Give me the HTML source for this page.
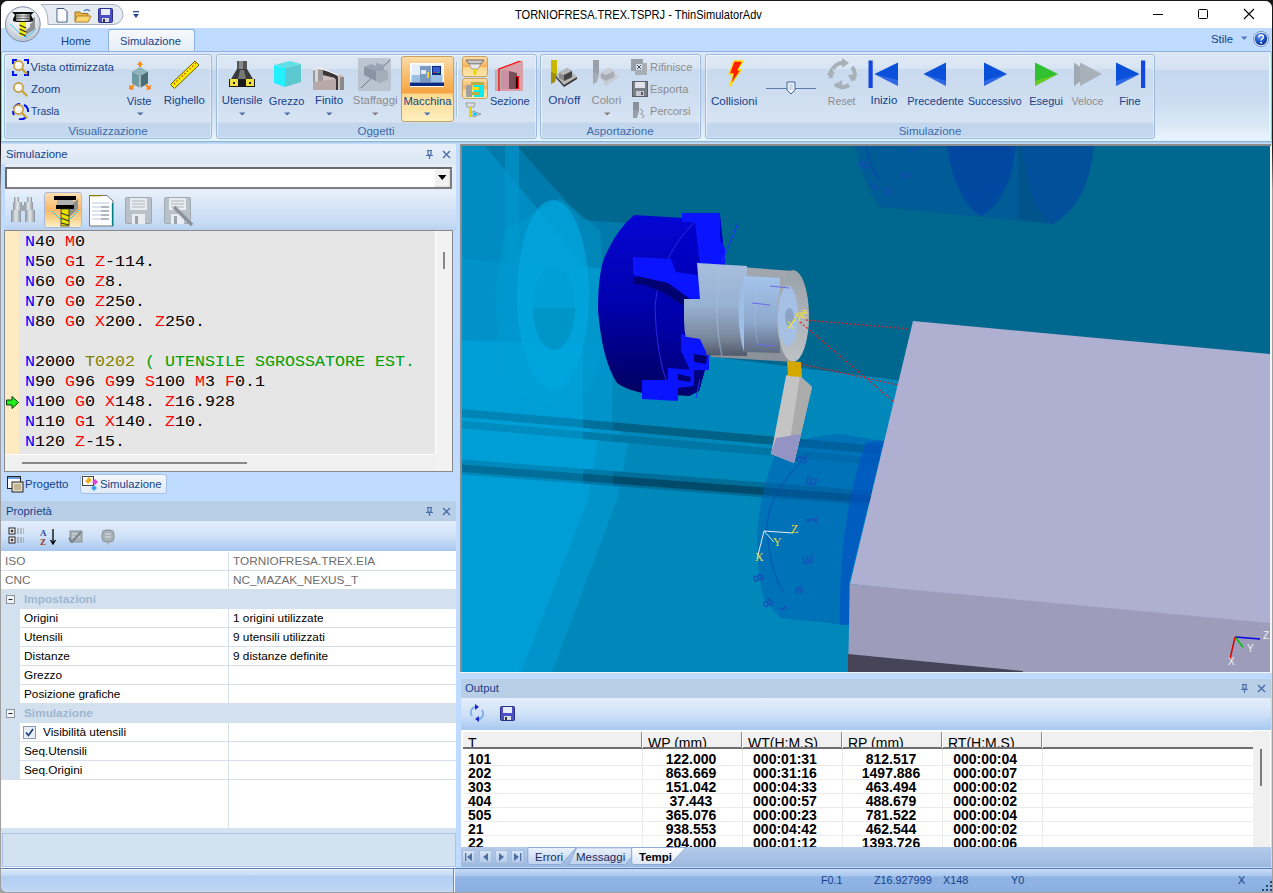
<!DOCTYPE html>
<html><head><meta charset="utf-8">
<style>
*{box-sizing:border-box;margin:0;padding:0}
html,body{width:1273px;height:893px;overflow:hidden;background:linear-gradient(#181818 0,#1c1c1c 150px,#9c9c9c 190px,#a0a0a0 100%)}
body{position:relative;font-family:"Liberation Sans",sans-serif}
.b{position:absolute;display:block}
.t{position:absolute;white-space:pre}
</style></head><body>

<div class="b" style="left:1px;top:1px;width:1271px;height:891px;background:#BFDBFF;border-radius:7px 7px 6px 6px;"></div>
<div class="b" style="left:1px;top:1px;width:1271px;height:27px;background:#fff;border-radius:7px 7px 0 0;"></div>
<div class="t" style="left:515px;top:8.67px;font-size:12.2px;line-height:12.2px;color:#000;font-weight:normal;font-family:'Liberation Sans',sans-serif;transform:scaleX(0.906);transform-origin:0 0;">TORNIOFRESA.TREX.TSPRJ - ThinSimulatorAdv</div>
<div class="b" style="left:1153px;top:14px;width:10px;height:1px;background:#000"></div>
<div class="b" style="left:1198px;top:9px;width:10px;height:10px;border:1px solid #000;border-radius:1.5px"></div>
<svg class="b" style="left:1243px;top:8px" width="12" height="12" viewBox="0 0 12 12"><path d="M1 1L11 11M11 1L1 11" stroke="#000" stroke-width="1.1"/></svg>
<svg class="b" style="left:40px;top:3px" width="90" height="23" viewBox="0 0 90 23"><path d="M1 1.5 H73 A10 10 0 0 1 73 21.5 H8 C8 10 5 4 1 1.5Z" fill="#E6EBF2" stroke="#A4B0C0" stroke-width="1"/></svg>
<svg class="b" style="left:56px;top:8px" width="12" height="15" viewBox="0 0 12 15"><path d="M1 .5H8L11 3.5V14H1Z" fill="#fff" stroke="#38527A" stroke-width="1"/><path d="M2 2V13H10" fill="none" stroke="#DDE3EE"/></svg>
<svg class="b" style="left:74px;top:8px" width="18" height="15" viewBox="0 0 18 15"><path d="M1 4H6L7.5 5.5H14V13H1Z" fill="#E8B440" stroke="#9C7424"/><path d="M3 8H17L14 14H1Z" fill="#FBD874" stroke="#B0862C"/><path d="M10 3Q13 0 16 3" fill="none" stroke="#3A6BB5" stroke-width="1.2"/></svg>
<svg class="b" style="left:98px;top:8px" width="15" height="15" viewBox="0 0 15 15"><rect x=".5" y=".5" width="14" height="14" rx="1" fill="#4B4FC4" stroke="#2A2E8A"/><rect x="3" y="1" width="9" height="6" fill="#E8ECF8"/><rect x="4" y="10" width="7" height="4" fill="#D8DCE8"/><rect x="5" y="11" width="2" height="3" fill="#333"/></svg>
<svg class="b" style="left:132px;top:10px" width="8" height="9" viewBox="0 0 8 9"><rect x="1" y="1" width="6" height="1.3" fill="#2B4C8C"/><path d="M1 4H7L4 8Z" fill="#2B4C8C"/></svg>
<svg class="b" style="left:4px;top:6px" width="38" height="38" viewBox="0 0 38 38">
<defs><radialGradient id="orbg" cx="50%" cy="30%" r="75%"><stop offset="0" stop-color="#FFFFFF"/><stop offset=".5" stop-color="#E6E9EE"/><stop offset="1" stop-color="#B0BACA"/></radialGradient>
<linearGradient id="met" x1="0" x2="1"><stop offset="0" stop-color="#808080"/><stop offset=".5" stop-color="#F0F0F0"/><stop offset="1" stop-color="#707070"/></linearGradient></defs>
<circle cx="18.8" cy="18.2" r="17.4" fill="url(#orbg)" stroke="#7D8FA8" stroke-width="1"/>
<path d="M6 17.8 L16 27.5 M19.5 30 L22.5 31.5 L32 23" stroke="#2ECCF4" stroke-width="1" fill="none"/>
<path d="M22 29 L31 23 V11 L28.5 13 V16 L26 18 V21 L22 24Z" fill="#8E8E8E"/>
<path d="M8 6 H30 L27 9 L29 13 V15 L26 16 H12 L9 15 V13 L11 9Z" fill="#111"/>
<rect x="12" y="8" width="14" height="7" fill="url(#met)"/>
<path d="M12 10H26M12 12.5H26" stroke="#555" stroke-width=".8"/>
<rect x="15.5" y="16" width="6.5" height="14" fill="#F0EC10"/>
<path d="M15.5 19L22 22M15.5 23L22 26M15.5 27L22 30" stroke="#222" stroke-width="1.3"/>
</svg>
<div class="t" style="left:61px;top:35.52px;font-size:11.2px;line-height:11.2px;color:#15428B;font-weight:normal;font-family:'Liberation Sans',sans-serif;">Home</div>
<div class="b" style="left:108px;top:29px;width:87px;height:23px;border:1px solid #8DB2E3;border-bottom:none;border-radius:3px 3px 0 0;background:linear-gradient(#F6F9FD,#E4EDF7)"></div>
<div class="t" style="left:120px;top:35.52px;font-size:11.2px;line-height:11.2px;color:#15428B;font-weight:normal;font-family:'Liberation Sans',sans-serif;">Simulazione</div>
<div class="t" style="left:1211px;top:34.43px;font-size:11.3px;line-height:11.3px;color:#15428B;font-weight:normal;font-family:'Liberation Sans',sans-serif;">Stile</div>
<svg class="b" style="left:1241px;top:36px" width="7" height="5" viewBox="0 0 7 5"><path d="M0 .5H6.5L3.25 4Z" fill="#567DB1"/></svg>
<svg class="b" style="left:1253px;top:31px" width="17" height="17" viewBox="0 0 17 17">
<defs><radialGradient id="hg" cx="40%" cy="30%" r="70%"><stop offset="0" stop-color="#78A8F4"/><stop offset=".55" stop-color="#2058D0"/><stop offset="1" stop-color="#0A3090"/></radialGradient></defs>
<circle cx="8" cy="8" r="7.6" fill="#E8EEF8" stroke="#6A84AC" stroke-width=".8"/><circle cx="8" cy="8" r="6.2" fill="url(#hg)"/>
<path d="M5.8 6.2Q5.8 4 8.1 4Q10.4 4 10.4 6Q10.4 7.3 8.9 8.1Q8.1 8.6 8.1 9.6" fill="none" stroke="#fff" stroke-width="1.5"/><circle cx="8.1" cy="11.7" r=".95" fill="#fff"/></svg>
<div class="b" style="left:1px;top:51px;width:1271px;height:90px;border-top:1px solid #8DB2E3;border-left:1px solid #9EBCE4;border-right:1px solid #9EBCE4;box-shadow:inset 2px 0 0 #D4FBFF,inset -2px 0 0 #D4FBFF;border-radius:3px 3px 0 0;background:linear-gradient(#DCE7F5 0px,#D5E2F2 17px,#C4D7EE 19px,#CBDCF0 50px,#DCEAF7 75px,#E7F3FC 86px)"></div>
<div class="b" style="left:1px;top:140px;width:1271px;height:1px;background:#D0FAFF"></div>
<div class="b" style="left:1px;top:141px;width:1271px;height:1px;background:#98B0D0"></div>
<div class="b" style="left:1px;top:142px;width:1271px;height:1px;background:#B4CEEE"></div>
<div class="b" style="left:4px;top:54px;width:208px;height:85px;border:1px solid #9EBBDD;border-radius:3px;background:linear-gradient(#DEE8F5 0px,#D9E5F3 13px,#C9DAEF 15px,#CEDDF0 40px,#D6E4F3 67px,#C2D7EE 68px,#C3D8EF 84px);box-shadow:inset 1px 1px 0 rgba(255,255,255,.55),inset -1px -1px 0 rgba(255,255,255,.35)"></div>
<div class="t" style="left:8px;width:200px;text-align:center;top:125.77px;font-size:11.5px;line-height:11.5px;color:#3E6AAA;font-weight:normal">Visualizzazione</div>
<div class="b" style="left:216px;top:54px;width:321px;height:85px;border:1px solid #9EBBDD;border-radius:3px;background:linear-gradient(#DEE8F5 0px,#D9E5F3 13px,#C9DAEF 15px,#CEDDF0 40px,#D6E4F3 67px,#C2D7EE 68px,#C3D8EF 84px);box-shadow:inset 1px 1px 0 rgba(255,255,255,.55),inset -1px -1px 0 rgba(255,255,255,.35)"></div>
<div class="t" style="left:276px;width:200px;text-align:center;top:125.77px;font-size:11.5px;line-height:11.5px;color:#3E6AAA;font-weight:normal">Oggetti</div>
<div class="b" style="left:540px;top:54px;width:161px;height:85px;border:1px solid #9EBBDD;border-radius:3px;background:linear-gradient(#DEE8F5 0px,#D9E5F3 13px,#C9DAEF 15px,#CEDDF0 40px,#D6E4F3 67px,#C2D7EE 68px,#C3D8EF 84px);box-shadow:inset 1px 1px 0 rgba(255,255,255,.55),inset -1px -1px 0 rgba(255,255,255,.35)"></div>
<div class="t" style="left:520px;width:200px;text-align:center;top:125.77px;font-size:11.5px;line-height:11.5px;color:#3E6AAA;font-weight:normal">Asportazione</div>
<div class="b" style="left:705px;top:54px;width:450px;height:85px;border:1px solid #9EBBDD;border-radius:3px;background:linear-gradient(#DEE8F5 0px,#D9E5F3 13px,#C9DAEF 15px,#CEDDF0 40px,#D6E4F3 67px,#C2D7EE 68px,#C3D8EF 84px);box-shadow:inset 1px 1px 0 rgba(255,255,255,.55),inset -1px -1px 0 rgba(255,255,255,.35)"></div>
<div class="t" style="left:830px;width:200px;text-align:center;top:125.77px;font-size:11.5px;line-height:11.5px;color:#3E6AAA;font-weight:normal">Simulazione</div>
<svg class="b" style="left:12px;top:59px" width="17" height="17" viewBox="0 0 17 17"><path d="M1 5V1H5M12 1H16V5M16 12V16H12M5 16H1V12" fill="none" stroke="#0010F0" stroke-width="2"/><circle cx="6.5" cy="6.5" r="4.6" fill="#F4F4F4" stroke="#C49A3C" stroke-width="1.6"/><circle cx="5.5" cy="5.5" r="1.8" fill="#fff"/><path d="M10 10L14.5 14.5" stroke="#C9A23A" stroke-width="2.4" stroke-linecap="round"/></svg>
<div class="t" style="left:30.5px;top:62.27px;font-size:11.5px;line-height:11.5px;color:#15428B;font-weight:normal;font-family:'Liberation Sans',sans-serif;">Vista ottimizzata</div>
<svg class="b" style="left:12px;top:81px" width="17" height="17" viewBox="0 0 17 17"><circle cx="6.5" cy="6.5" r="4.6" fill="#F4F4F4" stroke="#C49A3C" stroke-width="1.6"/><circle cx="5.5" cy="5.5" r="1.8" fill="#fff"/><path d="M10 10L14.5 14.5" stroke="#C9A23A" stroke-width="2.4" stroke-linecap="round"/></svg>
<div class="t" style="left:31px;top:84.27px;font-size:11.5px;line-height:11.5px;color:#15428B;font-weight:normal;font-family:'Liberation Sans',sans-serif;">Zoom</div>
<svg class="b" style="left:12px;top:103px" width="17" height="17" viewBox="0 0 17 17"><path d="M2 5A7 7 0 0 1 8 1M12 2A7 7 0 0 1 16 9M14 14A7 7 0 0 1 7 16M2 12A7 7 0 0 1 1 8" fill="none" stroke="#0010F0" stroke-width="2"/><circle cx="6.5" cy="6.5" r="4.6" fill="#F4F4F4" stroke="#C49A3C" stroke-width="1.6"/><circle cx="5.5" cy="5.5" r="1.8" fill="#fff"/><path d="M10 10L14.5 14.5" stroke="#C9A23A" stroke-width="2.4" stroke-linecap="round"/></svg>
<div class="t" style="left:31px;top:106.27px;font-size:11.5px;line-height:11.5px;color:#15428B;font-weight:normal;font-family:'Liberation Sans',sans-serif;transform:scaleX(0.9);transform-origin:0 0;">Trasla</div>
<svg class="b" style="left:129px;top:60px" width="23" height="30" viewBox="0 0 23 30"><path d="M11 1L14 5H12V7H10V5H8Z" fill="#FF8C00"/><path d="M11 7L19 11.5L11 16L3 11.5Z" fill="#8FB4BA"/><path d="M3 11.5L11 16V28L3 23.5Z" fill="#6F9AA2"/><path d="M19 11.5L11 16V28L19 23.5Z" fill="#4A6E78"/><path d="M11 16V28" stroke="#E8F0F0" stroke-width="1"/><path d="M1 29L5 25M21 29L17 25" stroke="#FF8800" stroke-width="2"/><path d="M1 29H5M1 29V25M21 29H17M21 29V25" stroke="#FF7000" stroke-width="1.2"/></svg>
<div class="t" style="left:39.19999999999999px;width:200px;text-align:center;top:95.52px;font-size:11.2px;line-height:11.2px;color:#15428B;font-weight:normal">Viste</div>
<svg class="b" style="left:136.5px;top:112px" width="7" height="6" viewBox="0 0 7 6"><path d="M0 1.5H6.5L3.25 4.8Z" fill="#FFFFFF" opacity=".8"/><path d="M0 .5H6.5L3.25 3.8Z" fill="#4F6EA4"/></svg>
<svg class="b" style="left:168px;top:59px" width="33" height="31" viewBox="0 0 33 31"><path d="M2.5 25.5L27 2L31 6L6.5 29.5Z" fill="#F8F000" stroke="#6A5A00" stroke-width="1"/><path d="M6 25L28 4" stroke="#E00000" stroke-width="1.2" stroke-dasharray="1.2 2.4"/></svg>
<div class="t" style="left:84.4px;width:200px;text-align:center;top:95.35px;font-size:11.4px;line-height:11.4px;color:#15428B;font-weight:normal">Righello</div>
<svg class="b" style="left:228px;top:61px" width="28" height="26" viewBox="0 0 28 26"><rect x="9" y="0" width="10" height="9" fill="#555"/><rect x="11" y="0" width="4" height="9" fill="#888"/><path d="M9 8L3 18V25H25V18L19 8Z" fill="#3A3A3A"/><path d="M12 9L10 18H18L16 9Z" fill="#777"/><rect x="1" y="18" width="26" height="8" fill="#1A1A1A"/><rect x="2" y="18" width="8" height="7" fill="#F0E040"/><rect x="18" y="18" width="8" height="7" fill="#F0E040"/><rect x="5" y="21" width="2" height="2" fill="#222"/><rect x="21" y="21" width="2" height="2" fill="#222"/></svg>
<div class="t" style="left:142.2px;width:200px;text-align:center;top:95.43px;font-size:11.3px;line-height:11.3px;color:#15428B;font-weight:normal">Utensile</div>
<svg class="b" style="left:238.6px;top:111.5px" width="7" height="6" viewBox="0 0 7 6"><path d="M0 1.5H6.5L3.25 4.8Z" fill="#FFFFFF" opacity=".8"/><path d="M0 .5H6.5L3.25 3.8Z" fill="#4F6EA4"/></svg>
<svg class="b" style="left:272px;top:60px" width="30" height="28" viewBox="0 0 30 28"><path d="M2 5L18 1L29 4L13 8Z" fill="#5EE0E6"/><path d="M2 5L13 8V27L2 23Z" fill="#22F0FF"/><path d="M13 8L29 4V22L13 27Z" fill="#5CC8D0"/></svg>
<div class="t" style="left:186.60000000000002px;width:200px;text-align:center;top:95.69px;font-size:11px;line-height:11px;color:#15428B;font-weight:normal">Grezzo</div>
<svg class="b" style="left:283.5px;top:111.5px" width="7" height="6" viewBox="0 0 7 6"><path d="M0 1.5H6.5L3.25 4.8Z" fill="#FFFFFF" opacity=".8"/><path d="M0 .5H6.5L3.25 3.8Z" fill="#4F6EA4"/></svg>
<svg class="b" style="left:312px;top:66px" width="33" height="26" viewBox="0 0 33 26"><path d="M1 4Q6 1 10 3L20 6Q24 7 26 9Q31 8 32 11V24H1Z" fill="#CDBDBD"/><path d="M1 4H11V15L1 16Z" fill="#9A9A9A"/><rect x="3" y="4" width="3" height="12" fill="#D8D8D8"/><path d="M11 4Q16 5 22 8Q25 9 26 11V24H23V12L11 9Z" fill="#3A3536"/><rect x="28" y="11" width="4" height="13" fill="#8A8A8A"/><path d="M1 16L24 13V24H1Z" fill="#B8A8A8"/><path d="M1 4Q8 0 13 4L26 9" fill="none" stroke="#fff" stroke-width="1"/></svg>
<div class="t" style="left:229.10000000000002px;width:200px;text-align:center;top:95.27px;font-size:11.5px;line-height:11.5px;color:#15428B;font-weight:normal">Finito</div>
<svg class="b" style="left:325.5px;top:111.5px" width="7" height="6" viewBox="0 0 7 6"><path d="M0 1.5H6.5L3.25 4.8Z" fill="#FFFFFF" opacity=".8"/><path d="M0 .5H6.5L3.25 3.8Z" fill="#4F6EA4"/></svg>
<svg class="b" style="left:358px;top:58px" width="33" height="33" viewBox="0 0 33 33"><rect x="0" y="0" width="33" height="33" fill="#B6BECA" opacity=".85"/><path d="M3 30L32 2" stroke="#6A7484" stroke-width="1"/><path d="M6 9L13 6L18 8V5L26 7V12L30 13V21L22 25L18 23V20L6 17Z" fill="#98A2B0"/><path d="M6 9L18 13V23L6 17Z" fill="#8894A4"/><path d="M18 13L30 13V21L22 25L18 23Z" fill="#A4AEBA"/></svg>
<div class="t" style="left:275.2px;width:200px;text-align:center;top:95.35px;font-size:11.4px;line-height:11.4px;color:#8C8C8C;font-weight:normal">Staffaggi</div>
<svg class="b" style="left:371.7px;top:111.5px" width="7" height="6" viewBox="0 0 7 6"><path d="M0 1.5H6.5L3.25 4.8Z" fill="#FFFFFF" opacity=".8"/><path d="M0 .5H6.5L3.25 3.8Z" fill="#808080"/></svg>
<div class="b" style="left:401px;top:56px;width:53px;height:66px;border:1px solid #C8A360;border-radius:3px;background:linear-gradient(#FBDCA8 0px,#F8C47C 14px,#F6AE52 30px,#F7A144 36px,#FBD98E 37px,#FDE7AE 55px,#FEF0C0 64px)"></div>
<svg class="b" style="left:410px;top:63px" width="34" height="25" viewBox="0 0 34 25"><rect x="0" y="0" width="34" height="24" fill="#FFFFFF"/><rect x="1.5" y="1.5" width="31" height="18" fill="#E4EEF8"/><rect x="1.5" y="12" width="31" height="7.5" fill="#9CC0E4"/><rect x="10" y="3" width="11" height="16" fill="#7A98C0"/><rect x="11" y="7" width="5" height="4" fill="#E8E8E8"/><rect x="17" y="9" width="2" height="6" fill="#F0D020"/><rect x="22" y="3" width="9" height="9" fill="#0A2A80"/><rect x="23" y="4" width="7" height="6" fill="#3A5AD0"/><rect x="24" y="9" width="2" height="1" fill="#E02020"/><rect x="27" y="9" width="2" height="1" fill="#20C040"/><rect x="0" y="19.5" width="34" height="3.5" fill="#0A2A80"/></svg>
<div class="t" style="left:327.5px;width:200px;text-align:center;top:95.52px;font-size:11.2px;line-height:11.2px;color:#15428B;font-weight:normal">Macchina</div>
<svg class="b" style="left:423.5px;top:111.7px" width="7" height="6" viewBox="0 0 7 6"><path d="M0 1.5H6.5L3.25 4.8Z" fill="#FFFFFF" opacity=".8"/><path d="M0 .5H6.5L3.25 3.8Z" fill="#4F6EA4"/></svg>
<div class="b" style="left:456px;top:62px;width:1px;height:55px;background:#A8C0DC;box-shadow:1px 0 0 #F0F6FC"></div>
<div class="b" style="left:462px;top:56px;width:26px;height:21px;border:1px solid #C8A360;border-radius:3px;background:linear-gradient(#FBDCA8,#F7B058 50%,#FAD48A 51%,#FDE6AA)"></div>
<div class="b" style="left:462px;top:78px;width:26px;height:21px;border:1px solid #C8A360;border-radius:3px;background:linear-gradient(#FBDCA8,#F7B058 50%,#FAD48A 51%,#FDE6AA)"></div>
<svg class="b" style="left:464px;top:58px" width="22" height="18" viewBox="0 0 22 18"><path d="M2 2H20L17 6H5Z" fill="#C8C8C8" stroke="#555" stroke-width=".8"/><path d="M5 6H17L14 11H8Z" fill="#E8E8E8" stroke="#777" stroke-width=".6"/><rect x="9.5" y="11" width="3" height="6" fill="#E8D800"/></svg>
<svg class="b" style="left:465px;top:80px" width="20" height="18" viewBox="0 0 20 18"><rect x="9" y="2" width="10" height="15" fill="#10E8F0"/><rect x="6" y="2" width="12" height="3" fill="#B8B040"/><rect x="3" y="7" width="11" height="3" fill="#F0E020"/><rect x="1" y="12" width="13" height="3" fill="#B8B040"/><rect x="1" y="5" width="6" height="12" fill="#A0A0A0"/></svg>
<svg class="b" style="left:465px;top:102px" width="17" height="17" viewBox="0 0 17 17"><path d="M1 1H10L9 5H2Z" fill="#E0E0E0" stroke="#777" stroke-width=".6"/><rect x="4" y="5" width="3" height="10" fill="#E8D800"/><path d="M8 9L16 12L8 15Z" fill="#D8E8F0" stroke="#888" stroke-width=".8"/><path d="M9 10L13 12L9 14Z" fill="#18B8F0"/></svg>
<svg class="b" style="left:493px;top:61px" width="31" height="31" viewBox="0 0 31 31"><path d="M2 9L30 0V30H2Z" fill="#D8A0A8"/><path d="M3 10Q6 6 10 8V28H3Z" fill="#C0B0B4"/><path d="M8 9Q12 8 16 10V28H8Z" fill="#C890A0"/><path d="M16 10L24 12V28H16Z" fill="#7A5058"/><rect x="22" y="15" width="4" height="13" fill="#F00" opacity=".9"/><rect x="23" y="16" width="2" height="11" fill="#300"/><path d="M6 30V8L30 -1" stroke="#FF0000" stroke-width="1.3" fill="none"/></svg>
<div class="t" style="left:409.8px;width:200px;text-align:center;top:95.69px;font-size:11px;line-height:11px;color:#15428B;font-weight:normal">Sezione</div>
<svg class="b" style="left:550px;top:60px" width="28" height="29" viewBox="0 0 28 29"><rect x="1" y="0" width="6" height="14" fill="#C8B800"/><path d="M1 12L7 14L5 22L1 24Z" fill="#A09000"/><path d="M6 15L19 9L27 17L14 26Z" fill="#B8B8B8"/><path d="M6 18L14 27L27 19V17L14 25L6 16Z" fill="#333"/><path d="M9 13L17 8L22 11V17L14 21L9 18Z" fill="#8A8A8A"/><path d="M9 13L17 8L22 11L14 15Z" fill="#B8B8B8"/><path d="M14 15V21L22 17V11Z" fill="#444"/></svg>
<div class="t" style="left:464.29999999999995px;width:200px;text-align:center;top:95.01px;font-size:11.8px;line-height:11.8px;color:#15428B;font-weight:normal">On/off</div>
<svg class="b" style="left:592px;top:60px" width="28" height="29" viewBox="0 0 28 29"><rect x="1" y="0" width="6" height="14" fill="#9A9FA8"/><path d="M1 12L7 14L5 22L1 24Z" fill="#A8ACB4"/><path d="M6 15L19 9L27 17L14 26Z" fill="#C8CCD4"/><path d="M9 13L17 8L22 11V17L14 21L9 18Z" fill="#A8ACB4"/><path d="M9 13L17 8L22 11L14 15Z" fill="#C8CCD4"/></svg>
<div class="t" style="left:506.4px;width:200px;text-align:center;top:95.35px;font-size:11.4px;line-height:11.4px;color:#8C8C8C;font-weight:normal">Colori</div>
<svg class="b" style="left:603.5px;top:111.5px" width="7" height="6" viewBox="0 0 7 6"><path d="M0 1.5H6.5L3.25 4.8Z" fill="#FFFFFF" opacity=".8"/><path d="M0 .5H6.5L3.25 3.8Z" fill="#808080"/></svg>
<svg class="b" style="left:631px;top:59px" width="16" height="16" viewBox="0 0 16 16"><path d="M0 0H12V5H5V12H0Z" fill="#9AA0A8"/><path d="M16 4V16H4V11H11V4Z" fill="#A8AEB6"/><path d="M6 6L10 10M10 6L6 10" stroke="#444" stroke-width="1"/></svg>
<div class="t" style="left:650.1px;top:61.52px;font-size:11.2px;line-height:11.2px;color:#8C8C8C;font-weight:normal;font-family:'Liberation Sans',sans-serif;">Rifinisce</div>
<svg class="b" style="left:632px;top:81px" width="16" height="16" viewBox="0 0 16 16"><rect x=".5" y=".5" width="15" height="15" fill="#7A8088" stroke="#5A6068"/><rect x="3" y="1" width="10" height="6" fill="#E0E4EA"/><rect x="4" y="10" width="8" height="5" fill="#C8CCD2"/><rect x="9" y="11" width="2" height="3" fill="#555"/></svg>
<div class="t" style="left:650.1px;top:83.60px;font-size:11.1px;line-height:11.1px;color:#8C8C8C;font-weight:normal;font-family:'Liberation Sans',sans-serif;">Esporta</div>
<svg class="b" style="left:631px;top:102px" width="17" height="17" viewBox="0 0 17 17"><rect x="2" y="0" width="6" height="9" fill="#8A9098"/><path d="M2 8L8 9L6 16L2 16Z" fill="#9AA0A8"/><path d="M9 7Q14 9 10 12Q15 14 11 16" fill="none" stroke="#A0A6AE" stroke-width="1.3"/></svg>
<div class="t" style="left:650.1px;top:105.69px;font-size:11px;line-height:11px;color:#8C8C8C;font-weight:normal;font-family:'Liberation Sans',sans-serif;">Percorsi</div>
<svg class="b" style="left:727px;top:60px" width="17" height="27" viewBox="0 0 17 27"><path d="M7 1H16L11 10H14L3 26L6 14H2Z" fill="#FF2000" stroke="#F8E000" stroke-width="1.3" stroke-linejoin="round"/></svg>
<div class="t" style="left:634.1px;width:200px;text-align:center;top:95.18px;font-size:11.6px;line-height:11.6px;color:#15428B;font-weight:normal">Collisioni</div>
<div class="b" style="left:766px;top:88px;width:50px;height:1px;background:#5A7EB0"></div>
<svg class="b" style="left:786px;top:81px" width="11" height="15" viewBox="0 0 11 15"><path d="M1 1H9V9L5 13L1 9Z" fill="#F0F4FA" stroke="#3E64A0" stroke-width="1"/><path d="M4 3V9M6 3V9" stroke="#9AB0D0" stroke-width=".8"/></svg>
<svg class="b" style="left:826px;top:58px" width="32" height="33" viewBox="0 0 32 33"><g fill="none" stroke="#A8B0B8" stroke-width="4.2"><path d="M7 11A11 11 0 0 1 18 5"/><path d="M26 9A11 11 0 0 1 27 22"/><path d="M23 27A11 11 0 0 1 9 26"/><path d="M5 20A11 11 0 0 1 5 15"/></g><g fill="#A8B0B8"><path d="M16 0L23 5L16 10Z"/><path d="M31 16L26 24L22 17Z"/><path d="M16 32L9 27L16 22Z"/><path d="M1 17L5 9L9 16Z"/></g></svg>
<div class="t" style="left:741.7px;width:200px;text-align:center;top:96.03px;font-size:10.6px;line-height:10.6px;color:#8C8C8C;font-weight:normal">Reset</div>
<svg class="b" style="left:868px;top:60px" width="31" height="29" viewBox="0 0 31 29"><rect x="0.5" y="0.5" width="4.2" height="27.5" fill="#1646E0"/><path d="M6.5 14L30 2.5V26Z" fill="#0A50D8"/><path d="M6.5 14L30 26V20Z" fill="#4A7AF0" opacity=".6"/></svg>
<div class="t" style="left:783.9px;width:200px;text-align:center;top:95.27px;font-size:11.5px;line-height:11.5px;color:#15428B;font-weight:normal">Inizio</div>
<svg class="b" style="left:922px;top:60px" width="25" height="29" viewBox="0 0 25 29"><path d="M1.5 14L24 2.5V26Z" fill="#0A50D8"/><path d="M1.5 14L24 26V21Z" fill="#4A7AF0" opacity=".6"/></svg>
<div class="t" style="left:835.4px;width:200px;text-align:center;top:95.69px;font-size:11px;line-height:11px;color:#15428B;font-weight:normal">Precedente</div>
<svg class="b" style="left:983px;top:60px" width="25" height="29" viewBox="0 0 25 29"><path d="M1 2.5L24 14L1 26Z" fill="#0A50D8"/><path d="M1 26L24 14L1 21Z" fill="#4A7AF0" opacity=".6"/></svg>
<div class="t" style="left:894.8px;width:200px;text-align:center;top:96.03px;font-size:10.6px;line-height:10.6px;color:#15428B;font-weight:normal">Successivo</div>
<svg class="b" style="left:1034px;top:60px" width="25" height="29" viewBox="0 0 25 29"><path d="M1 2.5L24 14L1 26Z" fill="#30C030"/><path d="M1 26L24 14L1 21Z" fill="#80D020" opacity=".7"/></svg>
<div class="t" style="left:946.0999999999999px;width:200px;text-align:center;top:95.69px;font-size:11px;line-height:11px;color:#15428B;font-weight:normal">Esegui</div>
<svg class="b" style="left:1073px;top:60px" width="30" height="29" viewBox="0 0 30 29"><path d="M1 2.5L17 14L1 26Z" fill="#A0A8B2"/><path d="M7 2.5L29 14L7 26Z" fill="#A8B0BA"/></svg>
<div class="t" style="left:987.5px;width:200px;text-align:center;top:95.94px;font-size:10.7px;line-height:10.7px;color:#8C8C8C;font-weight:normal">Veloce</div>
<svg class="b" style="left:1115px;top:60px" width="31" height="29" viewBox="0 0 31 29"><path d="M1 2.5L24.5 14L1 26Z" fill="#0A50D8"/><path d="M1 26L24.5 14L1 21Z" fill="#4A7AF0" opacity=".6"/><rect x="26" y="0.5" width="4.2" height="27.5" fill="#1646E0"/></svg>
<div class="t" style="left:1029.9px;width:200px;text-align:center;top:95.69px;font-size:11px;line-height:11px;color:#15428B;font-weight:normal">Fine</div>
<div class="b" style="left:1px;top:144px;width:455px;height:20px;background:linear-gradient(#E6EEF8,#DCE7F5)"></div>
<div class="t" style="left:6px;top:149.43px;font-size:11.3px;line-height:11.3px;color:#15428B;font-weight:normal;font-family:'Liberation Sans',sans-serif;">Simulazione</div>
<svg class="b" style="left:425px;top:150px" width="9" height="9" viewBox="0 0 9 9"><path d="M2 .5H7M3 .5V5H6V.5M1 5.5H8M4.5 5.5V9" fill="none" stroke="#4A6CA8" stroke-width="1.2"/></svg>
<svg class="b" style="left:442px;top:150px" width="9" height="9" viewBox="0 0 9 9"><path d="M1 1L8 8M8 1L1 8" stroke="#4A6CA8" stroke-width="1.4"/></svg>
<div class="b" style="left:5px;top:164px;width:451px;height:26px;background:#E4ECF7"></div>
<div class="b" style="left:5px;top:167px;width:447px;height:22px;background:#fff;border:2px solid;border-color:#6A6A6A #7E7E7E #7E7E7E #6A6A6A"></div>
<div class="b" style="left:434px;top:169px;width:16px;height:18px;background:#F0F0F0;border:1px solid;border-color:#fff #E0E0E0 #E0E0E0 #fff"></div>
<svg class="b" style="left:438px;top:175px" width="9" height="6" viewBox="0 0 9 6"><path d="M0 0H8.5L4.25 5Z" fill="#000"/></svg>
<div class="b" style="left:5px;top:190px;width:451px;height:40px;background:linear-gradient(#E8F0FB,#C4DAF4 85%,#B8D0F0)"></div>
<svg class="b" style="left:11px;top:197px" width="27" height="26" viewBox="0 0 27 26"><defs><linearGradient id="bn" x1="0" x2="1"><stop offset="0" stop-color="#8A939C"/><stop offset=".5" stop-color="#E4E8EC"/><stop offset="1" stop-color="#8A939C"/></linearGradient></defs><rect x="3" y="0" width="5" height="5" fill="url(#bn)"/><rect x="16" y="0" width="5" height="5" fill="url(#bn)"/><rect x="2" y="5" width="9" height="8" fill="url(#bn)"/><rect x="13" y="5" width="9" height="8" fill="url(#bn)"/><rect x="0" y="13" width="10" height="12" fill="url(#bn)"/><rect x="14" y="13" width="10" height="12" fill="url(#bn)"/><rect x="9" y="8" width="6" height="6" fill="#A0A8B0"/></svg>
<div class="b" style="left:44px;top:192px;width:38px;height:36px;border:1px solid #A8B8D8;border-radius:3px;background:linear-gradient(#FCE0B0,#F8B868 50%,#FAD898 80%,#FEEFC8)"></div>
<svg class="b" style="left:49px;top:194px" width="31" height="33" viewBox="0 0 31 33"><path d="M3 17L12 26M19 27L30 16" stroke="#20D0E8" stroke-width="1"/><path d="M19 24L29 15V5L24 9V13L19 16Z" fill="#8E8E8E"/><rect x="5" y="2" width="22" height="4" fill="#000"/><rect x="8" y="6" width="16" height="5" fill="#B0B0B0"/><rect x="7" y="11" width="18" height="4" fill="#000"/><rect x="12" y="15" width="8" height="17" fill="#E8E000" stroke="#333" stroke-width=".8"/><path d="M12 19L20 22M12 24L20 27M12 29L20 31" stroke="#333" stroke-width="1.2"/></svg>
<svg class="b" style="left:89px;top:195px" width="25" height="32" viewBox="0 0 25 32"><path d="M.5 .5H18L24 6V31H.5Z" fill="#fff" stroke="#777" stroke-width="1"/><path d="M.5 .5H12" stroke="#8A7A00" stroke-width="1.5"/><path d="M23.5 8V31" stroke="#008080" stroke-width="1.3"/><path d="M3 8H20M3 12H20M3 16H20M3 20H20M3 24H20" stroke="#B8C8E8" stroke-width="1"/><path d="M12 12H20M12 16H20M12 20H20M12 24H20" stroke="#888" stroke-width="1"/></svg>
<svg class="b" style="left:125px;top:197px" width="27" height="27" viewBox="0 0 27 27"><rect x=".5" y=".5" width="26" height="26" rx="1" fill="#B8C0CA" stroke="#A0A8B2"/><rect x="5" y="1" width="17" height="12" fill="#E8ECF0"/><path d="M7 4H20M7 7H20M7 10H20" stroke="#B0B8C0"/><rect x="7" y="17" width="13" height="10" fill="#E8ECF0"/><rect x="10" y="19" width="3" height="8" fill="#9AA2AC"/></svg>
<svg class="b" style="left:164px;top:197px" width="30" height="30" viewBox="0 0 30 30"><rect x=".5" y=".5" width="26" height="26" rx="1" fill="#B8C0CA" stroke="#A0A8B2"/><rect x="5" y="1" width="17" height="12" fill="#E8ECF0"/><path d="M7 4H20M7 7H20M7 10H20" stroke="#B0B8C0"/><rect x="7" y="17" width="13" height="10" fill="#E8ECF0"/><rect x="10" y="19" width="3" height="8" fill="#9AA2AC"/><path d="M10 10L28 28" stroke="#8A929C" stroke-width="3.5"/></svg>
<div class="b" style="left:4px;top:230px;width:449px;height:242px;background:#F0F0F0;border:1px solid #8A8A8A"></div>
<div class="b" style="left:5px;top:231px;width:430px;height:223px;background:#E6E6E6"></div>
<div class="b" style="left:5px;top:231px;width:14px;height:223px;background:#FFEBC1"></div>
<div class="b" style="left:435px;top:231px;width:1px;height:223px;background:#fff"></div>
<div class="b" style="left:5px;top:454px;width:430px;height:1px;background:#fff"></div>
<div class="b" style="left:436px;top:231px;width:16px;height:240px;background:#F2F2F2"></div>
<div class="b" style="left:443px;top:252px;width:2px;height:17px;background:#888"></div>
<div class="b" style="left:22px;top:462px;width:225px;height:2px;background:#888"></div>
<div class="b" style="left:5px;top:231px;width:430px;height:223px;overflow:hidden">
<div class="t" style="left:20px;top:1.20px;font-family:'Liberation Mono',monospace;font-size:14.4px;line-height:20px;color:#000;transform:scaleX(1.1575);transform-origin:0 0"><span style="color:#0000FF">N</span>40 <span style="color:#FF0000">M</span>0</div>
<div class="t" style="left:20px;top:21.20px;font-family:'Liberation Mono',monospace;font-size:14.4px;line-height:20px;color:#000;transform:scaleX(1.1575);transform-origin:0 0"><span style="color:#0000FF">N</span>50 <span style="color:#FF0000">G</span>1 <span style="color:#FF0000">Z</span>-114.</div>
<div class="t" style="left:20px;top:41.20px;font-family:'Liberation Mono',monospace;font-size:14.4px;line-height:20px;color:#000;transform:scaleX(1.1575);transform-origin:0 0"><span style="color:#0000FF">N</span>60 <span style="color:#FF0000">G</span>0 <span style="color:#FF0000">Z</span>8.</div>
<div class="t" style="left:20px;top:61.20px;font-family:'Liberation Mono',monospace;font-size:14.4px;line-height:20px;color:#000;transform:scaleX(1.1575);transform-origin:0 0"><span style="color:#0000FF">N</span>70 <span style="color:#FF0000">G</span>0 <span style="color:#FF0000">Z</span>250.</div>
<div class="t" style="left:20px;top:81.20px;font-family:'Liberation Mono',monospace;font-size:14.4px;line-height:20px;color:#000;transform:scaleX(1.1575);transform-origin:0 0"><span style="color:#0000FF">N</span>80 <span style="color:#FF0000">G</span>0 <span style="color:#FF0000">X</span>200. <span style="color:#FF0000">Z</span>250.</div>
<div class="t" style="left:20px;top:101.20px;font-family:'Liberation Mono',monospace;font-size:14.4px;line-height:20px;color:#000;transform:scaleX(1.1575);transform-origin:0 0"></div>
<div class="t" style="left:20px;top:121.20px;font-family:'Liberation Mono',monospace;font-size:14.4px;line-height:20px;color:#000;transform:scaleX(1.1575);transform-origin:0 0"><span style="color:#0000FF">N</span>2000 <span style="color:#808000">T0202</span> <span style="color:#00A000">( UTENSILE SGROSSATORE EST.</span></div>
<div class="t" style="left:20px;top:141.20px;font-family:'Liberation Mono',monospace;font-size:14.4px;line-height:20px;color:#000;transform:scaleX(1.1575);transform-origin:0 0"><span style="color:#0000FF">N</span>90 <span style="color:#FF0000">G</span>96 <span style="color:#FF0000">G</span>99 <span style="color:#FF0000">S</span>100 <span style="color:#FF0000">M</span>3 <span style="color:#FF0000">F</span>0.1</div>
<div class="t" style="left:20px;top:161.20px;font-family:'Liberation Mono',monospace;font-size:14.4px;line-height:20px;color:#000;transform:scaleX(1.1575);transform-origin:0 0"><span style="color:#0000FF">N</span>100 <span style="color:#FF0000">G</span>0 <span style="color:#FF0000">X</span>148. <span style="color:#FF0000">Z</span>16.928</div>
<div class="t" style="left:20px;top:181.20px;font-family:'Liberation Mono',monospace;font-size:14.4px;line-height:20px;color:#000;transform:scaleX(1.1575);transform-origin:0 0"><span style="color:#0000FF">N</span>110 <span style="color:#FF0000">G</span>1 <span style="color:#FF0000">X</span>140. <span style="color:#FF0000">Z</span>10.</div>
<div class="t" style="left:20px;top:201.20px;font-family:'Liberation Mono',monospace;font-size:14.4px;line-height:20px;color:#000;transform:scaleX(1.1575);transform-origin:0 0"><span style="color:#0000FF">N</span>120 <span style="color:#FF0000">Z</span>-15.</div>
</div>
<svg class="b" style="left:6px;top:396px" width="13" height="13" viewBox="0 0 13 13"><path d="M.5 4H6V.5L12.5 6.5L6 12.5V9H.5Z" fill="#22EE22" stroke="#0A3A0A" stroke-width="1"/></svg>
<div class="b" style="left:5px;top:472px;width:451px;height:28px;background:#BFDBFF"></div>
<svg class="b" style="left:7px;top:476px" width="17" height="17" viewBox="0 0 17 17"><rect x=".5" y=".5" width="13" height="12" fill="#fff" stroke="#222"/><rect x="1" y="1" width="12" height="2" fill="#6A9AD8"/><rect x="5" y="6" width="11" height="10" fill="#E8E0C8" stroke="#222"/><path d="M7 9H14M7 11H14M7 13H14" stroke="#9A8A60"/></svg>
<div class="t" style="left:25px;top:479.27px;font-size:11.5px;line-height:11.5px;color:#15428B;font-weight:normal;font-family:'Liberation Sans',sans-serif;">Progetto</div>
<div class="b" style="left:80px;top:474px;width:87px;height:20px;border:1px solid #A4C0E4;border-radius:3px;background:linear-gradient(#F4F8FD,#E0EAF6)"></div>
<svg class="b" style="left:82px;top:476px" width="17" height="16" viewBox="0 0 17 16"><rect x=".5" y=".5" width="11" height="9" fill="#fff" stroke="#444"/><path d="M3 5L7 1L10 4L6 8Z" fill="#F0B020"/><path d="M10 6L13 3L16 6L13 9Z" fill="#E040E0"/><path d="M9 12L12 9L15 12L12 15Z" fill="#40A0F0"/></svg>
<div class="t" style="left:100px;top:479.43px;font-size:11.3px;line-height:11.3px;color:#15428B;font-weight:normal;font-family:'Liberation Sans',sans-serif;">Simulazione</div>
<div class="b" style="left:1px;top:501px;width:455px;height:20px;background:#B9CFE8"></div>
<div class="t" style="left:6px;top:505.93px;font-size:11.3px;line-height:11.3px;color:#15428B;font-weight:normal;font-family:'Liberation Sans',sans-serif;">Proprietà</div>
<svg class="b" style="left:425px;top:507px" width="9" height="9" viewBox="0 0 9 9"><path d="M2 .5H7M3 .5V5H6V.5M1 5.5H8M4.5 5.5V9" fill="none" stroke="#4A6CA8" stroke-width="1.2"/></svg>
<svg class="b" style="left:442px;top:507px" width="9" height="9" viewBox="0 0 9 9"><path d="M1 1L8 8M8 1L1 8" stroke="#4A6CA8" stroke-width="1.4"/></svg>
<div class="b" style="left:1px;top:521px;width:455px;height:30px;background:linear-gradient(#E4EEFB,#D0E2F8 50%,#A8C8F0)"></div>
<svg class="b" style="left:8px;top:527px" width="17" height="18" viewBox="0 0 17 18"><rect x="1" y="1" width="6" height="6" fill="#fff" stroke="#222"/><rect x="1" y="10" width="6" height="6" fill="#fff" stroke="#222"/><path d="M2.5 4H5.5M4 2.5V5.5M2.5 13H5.5M4 11.5V14.5" stroke="#000"/><path d="M9 2H16M9 4H16M9 6H16M9 11H16M9 13H16M9 15H16" stroke="#8A8A8A" stroke-dasharray="2 1"/></svg>
<svg class="b" style="left:40px;top:528px" width="17" height="17" viewBox="0 0 17 17"><text x="0" y="8" font-family="Liberation Serif" font-weight="bold" font-size="9" fill="#3050A0">A</text><text x="0" y="16.5" font-family="Liberation Serif" font-weight="bold" font-size="9" fill="#A03020">Z</text><path d="M13 1V15M10.5 12L13 16L15.5 12" stroke="#000" stroke-width="1.3" fill="none"/></svg>
<svg class="b" style="left:68px;top:529px" width="16" height="15" viewBox="0 0 16 15"><rect x="2" y="2" width="12" height="11" fill="#A8B0B8" stroke="#8A929A"/><path d="M4 5H12M4 8H12" stroke="#D8DCE0"/><path d="M1 9L4 13L13 3" stroke="#7A828A" stroke-width="2" fill="none"/></svg>
<svg class="b" style="left:100px;top:528px" width="16" height="17" viewBox="0 0 16 17"><rect x="2" y="2" width="12" height="12" rx="4" fill="#A8B0B8" stroke="#8A929A"/><path d="M5 6H11M5 9H11" stroke="#E0E4E8"/><path d="M6 14L8 17L10 14" fill="#A8B0B8"/></svg>
<div class="b" style="left:1px;top:551px;width:455px;height:277px;background:#fff"></div>
<div class="b" style="left:1px;top:609px;width:19px;height:171px;background:#D3E1EF"></div>
<div class="b" style="left:1px;top:570px;width:455px;height:1px;background:#D5E0EC"></div>
<div class="b" style="left:228px;top:552px;width:1px;height:19px;background:#D5E0EC"></div>
<div class="t" style="left:5px;top:556.01px;font-size:11.8px;line-height:11.8px;color:#6D6D6D;font-weight:normal;font-family:'Liberation Sans',sans-serif;">ISO</div>
<div class="t" style="left:233px;top:556.01px;font-size:11.8px;line-height:11.8px;color:#6D6D6D;font-weight:normal;font-family:'Liberation Sans',sans-serif;">TORNIOFRESA.TREX.EIA</div>
<div class="b" style="left:1px;top:589px;width:455px;height:1px;background:#D5E0EC"></div>
<div class="b" style="left:228px;top:571px;width:1px;height:19px;background:#D5E0EC"></div>
<div class="t" style="left:5px;top:575.01px;font-size:11.8px;line-height:11.8px;color:#6D6D6D;font-weight:normal;font-family:'Liberation Sans',sans-serif;">CNC</div>
<div class="t" style="left:233px;top:575.01px;font-size:11.8px;line-height:11.8px;color:#6D6D6D;font-weight:normal;font-family:'Liberation Sans',sans-serif;">NC_MAZAK_NEXUS_T</div>
<div class="b" style="left:1px;top:590px;width:455px;height:19px;background:#D3E1EF"></div>
<svg class="b" style="left:6px;top:595px" width="10" height="10" viewBox="0 0 10 10"><rect x=".5" y=".5" width="8" height="8" fill="#F4F4F4" stroke="#8A94A0"/><path d="M2.5 4.5H6.5" stroke="#222"/></svg>
<div class="t" style="left:24px;top:594.01px;font-size:11.8px;line-height:11.8px;color:#9DB6D2;font-weight:bold;font-family:'Liberation Sans',sans-serif;">Impostazioni</div>
<div class="b" style="left:1px;top:627px;width:455px;height:1px;background:#D5E0EC"></div>
<div class="b" style="left:228px;top:609px;width:1px;height:19px;background:#D5E0EC"></div>
<div class="t" style="left:24px;top:613.01px;font-size:11.8px;line-height:11.8px;color:#000;font-weight:normal;font-family:'Liberation Sans',sans-serif;">Origini</div>
<div class="t" style="left:233px;top:613.01px;font-size:11.8px;line-height:11.8px;color:#000;font-weight:normal;font-family:'Liberation Sans',sans-serif;">1 origini utilizzate</div>
<div class="b" style="left:1px;top:646px;width:455px;height:1px;background:#D5E0EC"></div>
<div class="b" style="left:228px;top:628px;width:1px;height:19px;background:#D5E0EC"></div>
<div class="t" style="left:24px;top:632.01px;font-size:11.8px;line-height:11.8px;color:#000;font-weight:normal;font-family:'Liberation Sans',sans-serif;">Utensili</div>
<div class="t" style="left:233px;top:632.01px;font-size:11.8px;line-height:11.8px;color:#000;font-weight:normal;font-family:'Liberation Sans',sans-serif;">9 utensili utilizzati</div>
<div class="b" style="left:1px;top:665px;width:455px;height:1px;background:#D5E0EC"></div>
<div class="b" style="left:228px;top:647px;width:1px;height:19px;background:#D5E0EC"></div>
<div class="t" style="left:24px;top:651.01px;font-size:11.8px;line-height:11.8px;color:#000;font-weight:normal;font-family:'Liberation Sans',sans-serif;">Distanze</div>
<div class="t" style="left:233px;top:651.01px;font-size:11.8px;line-height:11.8px;color:#000;font-weight:normal;font-family:'Liberation Sans',sans-serif;">9 distanze definite</div>
<div class="b" style="left:1px;top:684px;width:455px;height:1px;background:#D5E0EC"></div>
<div class="b" style="left:228px;top:666px;width:1px;height:19px;background:#D5E0EC"></div>
<div class="t" style="left:24px;top:670.01px;font-size:11.8px;line-height:11.8px;color:#000;font-weight:normal;font-family:'Liberation Sans',sans-serif;">Grezzo</div>
<div class="b" style="left:1px;top:703px;width:455px;height:1px;background:#D5E0EC"></div>
<div class="b" style="left:228px;top:685px;width:1px;height:19px;background:#D5E0EC"></div>
<div class="t" style="left:24px;top:689.01px;font-size:11.8px;line-height:11.8px;color:#000;font-weight:normal;font-family:'Liberation Sans',sans-serif;">Posizione grafiche</div>
<div class="b" style="left:1px;top:704px;width:455px;height:19px;background:#D3E1EF"></div>
<svg class="b" style="left:6px;top:709px" width="10" height="10" viewBox="0 0 10 10"><rect x=".5" y=".5" width="8" height="8" fill="#F4F4F4" stroke="#8A94A0"/><path d="M2.5 4.5H6.5" stroke="#222"/></svg>
<div class="t" style="left:24px;top:708.01px;font-size:11.8px;line-height:11.8px;color:#9DB6D2;font-weight:bold;font-family:'Liberation Sans',sans-serif;">Simulazione</div>
<div class="b" style="left:1px;top:741px;width:455px;height:1px;background:#D5E0EC"></div>
<div class="b" style="left:228px;top:723px;width:1px;height:19px;background:#D5E0EC"></div>
<div class="t" style="left:24px;top:727.01px;font-size:11.8px;line-height:11.8px;color:#000;font-weight:normal;font-family:'Liberation Sans',sans-serif;"></div>
<div class="t" style="left:43px;top:727.01px;font-size:11.8px;line-height:11.8px;color:#000;font-weight:normal;font-family:'Liberation Sans',sans-serif;">Visibilità utensili</div>
<svg class="b" style="left:23px;top:726px" width="13" height="13" viewBox="0 0 13 13"><rect x=".5" y=".5" width="12" height="12" fill="#E8EEF6" stroke="#8A9AB0"/><path d="M3 6.5L5.5 9.5L10 3" stroke="#1A3A80" stroke-width="1.6" fill="none"/></svg>
<div class="b" style="left:1px;top:760px;width:455px;height:1px;background:#D5E0EC"></div>
<div class="b" style="left:228px;top:742px;width:1px;height:19px;background:#D5E0EC"></div>
<div class="t" style="left:24px;top:746.01px;font-size:11.8px;line-height:11.8px;color:#000;font-weight:normal;font-family:'Liberation Sans',sans-serif;">Seq.Utensili</div>
<div class="b" style="left:1px;top:779px;width:455px;height:1px;background:#D5E0EC"></div>
<div class="b" style="left:228px;top:761px;width:1px;height:19px;background:#D5E0EC"></div>
<div class="t" style="left:24px;top:765.01px;font-size:11.8px;line-height:11.8px;color:#000;font-weight:normal;font-family:'Liberation Sans',sans-serif;">Seq.Origini</div>
<div class="b" style="left:228px;top:780px;width:1px;height:48px;background:#D5E0EC"></div>
<div class="b" style="left:1px;top:828px;width:455px;height:40px;background:#D4E3F2"></div>
<div class="b" style="left:2px;top:833px;width:454px;height:34px;background:#D3E2F1;border:1px solid #A9C4E4"></div>
<div class="b" style="left:1px;top:867px;width:455px;height:1px;background:#fff"></div>
<div class="b" style="left:461px;top:679px;width:810px;height:19px;background:#B9CFE8"></div>
<div class="t" style="left:465px;top:683.43px;font-size:11.3px;line-height:11.3px;color:#15428B;font-weight:normal;font-family:'Liberation Sans',sans-serif;">Output</div>
<svg class="b" style="left:1240px;top:684px" width="9" height="9" viewBox="0 0 9 9"><path d="M2 .5H7M3 .5V5H6V.5M1 5.5H8M4.5 5.5V9" fill="none" stroke="#4A6CA8" stroke-width="1.2"/></svg>
<svg class="b" style="left:1257px;top:684px" width="9" height="9" viewBox="0 0 9 9"><path d="M1 1L8 8M8 1L1 8" stroke="#4A6CA8" stroke-width="1.4"/></svg>
<div class="b" style="left:461px;top:698px;width:810px;height:32px;background:linear-gradient(#E4EEFB,#D0E2F8 50%,#A8C8F0)"></div>
<svg class="b" style="left:469px;top:704px" width="16" height="18" viewBox="0 0 16 18"><path d="M8 2.5A6 6 0 0 0 3 12" fill="none" stroke="#70A8E8" stroke-width="1.6"/><path d="M8 15.5A6 6 0 0 0 13 6" fill="none" stroke="#70A8E8" stroke-width="1.6"/><path d="M6 0L10 3L6 6Z" fill="#1A2AD0"/><path d="M10 18L6 15L10 12Z" fill="#1A2AD0"/></svg>
<svg class="b" style="left:500px;top:706px" width="15" height="15" viewBox="0 0 15 15"><rect x=".5" y=".5" width="14" height="14" rx="1" fill="#4B4FC4" stroke="#2A2E8A"/><rect x="3" y="1" width="9" height="6" fill="#E8ECF8"/><rect x="4" y="10" width="7" height="4" fill="#D8DCE8"/><rect x="5" y="11" width="2" height="3" fill="#333"/></svg>
<div class="b" style="left:461px;top:730px;width:810px;height:117px;background:#fff"></div>
<div class="b" style="left:463px;top:732px;width:790px;height:16px;background:#F0F0F0"></div>
<div class="b" style="left:463px;top:747px;width:790px;height:2px;background:#6E6E6E"></div>
<div class="b" style="left:641px;top:732px;width:2px;height:16px;background:#8A8A8A;border-right:1px solid #fff"></div>
<div class="b" style="left:741px;top:732px;width:2px;height:16px;background:#8A8A8A;border-right:1px solid #fff"></div>
<div class="b" style="left:841px;top:732px;width:2px;height:16px;background:#8A8A8A;border-right:1px solid #fff"></div>
<div class="b" style="left:941px;top:732px;width:2px;height:16px;background:#8A8A8A;border-right:1px solid #fff"></div>
<div class="b" style="left:1041px;top:732px;width:2px;height:16px;background:#8A8A8A;border-right:1px solid #fff"></div>
<div class="b" style="left:463px;top:732px;width:790px;height:15px;overflow:hidden">
<div class="t" style="left:5px;top:4.15px;font-size:14px;line-height:14px;color:#000">T</div>
<div class="t" style="left:185px;top:4.15px;font-size:14px;line-height:14px;color:#000">WP (mm)</div>
<div class="t" style="left:285px;top:4.15px;font-size:14px;line-height:14px;color:#000">WT(H:M.S)</div>
<div class="t" style="left:385px;top:4.15px;font-size:14px;line-height:14px;color:#000">RP (mm)</div>
<div class="t" style="left:485px;top:4.15px;font-size:14px;line-height:14px;color:#000">RT(H:M.S)</div>
</div>
<div class="b" style="left:463px;top:749px;width:790px;height:98px;overflow:hidden">
<div class="b" style="left:0;top:16px;width:790px;height:1px;background:#EBEBEB"></div>
<div class="b" style="left:0;top:30px;width:790px;height:1px;background:#EBEBEB"></div>
<div class="b" style="left:0;top:44px;width:790px;height:1px;background:#EBEBEB"></div>
<div class="b" style="left:0;top:58px;width:790px;height:1px;background:#EBEBEB"></div>
<div class="b" style="left:0;top:72px;width:790px;height:1px;background:#EBEBEB"></div>
<div class="b" style="left:0;top:86px;width:790px;height:1px;background:#EBEBEB"></div>
<div class="b" style="left:0;top:100px;width:790px;height:1px;background:#EBEBEB"></div>
<div class="b" style="left:179px;top:0;width:1px;height:98px;background:#EBEBEB"></div>
<div class="b" style="left:279px;top:0;width:1px;height:98px;background:#EBEBEB"></div>
<div class="b" style="left:379px;top:0;width:1px;height:98px;background:#EBEBEB"></div>
<div class="b" style="left:479px;top:0;width:1px;height:98px;background:#EBEBEB"></div>
<div class="b" style="left:579px;top:0;width:1px;height:98px;background:#EBEBEB"></div>
<div class="t" style="left:5px;top:3.15px;font-size:14px;line-height:14px;font-weight:bold;color:#000">101</div>
<div class="t" style="left:168px;width:120px;text-align:center;top:3.15px;font-size:14px;line-height:14px;font-weight:bold;color:#000">122.000</div>
<div class="t" style="left:262px;width:120px;text-align:center;top:3.15px;font-size:14px;line-height:14px;font-weight:bold;color:#000">000:01:31</div>
<div class="t" style="left:368px;width:120px;text-align:center;top:3.15px;font-size:14px;line-height:14px;font-weight:bold;color:#000">812.517</div>
<div class="t" style="left:462.20000000000005px;width:120px;text-align:center;top:3.15px;font-size:14px;line-height:14px;font-weight:bold;color:#000">000:00:04</div>
<div class="t" style="left:5px;top:17.15px;font-size:14px;line-height:14px;font-weight:bold;color:#000">202</div>
<div class="t" style="left:168px;width:120px;text-align:center;top:17.15px;font-size:14px;line-height:14px;font-weight:bold;color:#000">863.669</div>
<div class="t" style="left:262px;width:120px;text-align:center;top:17.15px;font-size:14px;line-height:14px;font-weight:bold;color:#000">000:31:16</div>
<div class="t" style="left:368px;width:120px;text-align:center;top:17.15px;font-size:14px;line-height:14px;font-weight:bold;color:#000">1497.886</div>
<div class="t" style="left:462.20000000000005px;width:120px;text-align:center;top:17.15px;font-size:14px;line-height:14px;font-weight:bold;color:#000">000:00:07</div>
<div class="t" style="left:5px;top:31.15px;font-size:14px;line-height:14px;font-weight:bold;color:#000">303</div>
<div class="t" style="left:168px;width:120px;text-align:center;top:31.15px;font-size:14px;line-height:14px;font-weight:bold;color:#000">151.042</div>
<div class="t" style="left:262px;width:120px;text-align:center;top:31.15px;font-size:14px;line-height:14px;font-weight:bold;color:#000">000:04:33</div>
<div class="t" style="left:368px;width:120px;text-align:center;top:31.15px;font-size:14px;line-height:14px;font-weight:bold;color:#000">463.494</div>
<div class="t" style="left:462.20000000000005px;width:120px;text-align:center;top:31.15px;font-size:14px;line-height:14px;font-weight:bold;color:#000">000:00:02</div>
<div class="t" style="left:5px;top:45.15px;font-size:14px;line-height:14px;font-weight:bold;color:#000">404</div>
<div class="t" style="left:168px;width:120px;text-align:center;top:45.15px;font-size:14px;line-height:14px;font-weight:bold;color:#000">37.443</div>
<div class="t" style="left:262px;width:120px;text-align:center;top:45.15px;font-size:14px;line-height:14px;font-weight:bold;color:#000">000:00:57</div>
<div class="t" style="left:368px;width:120px;text-align:center;top:45.15px;font-size:14px;line-height:14px;font-weight:bold;color:#000">488.679</div>
<div class="t" style="left:462.20000000000005px;width:120px;text-align:center;top:45.15px;font-size:14px;line-height:14px;font-weight:bold;color:#000">000:00:02</div>
<div class="t" style="left:5px;top:59.15px;font-size:14px;line-height:14px;font-weight:bold;color:#000">505</div>
<div class="t" style="left:168px;width:120px;text-align:center;top:59.15px;font-size:14px;line-height:14px;font-weight:bold;color:#000">365.076</div>
<div class="t" style="left:262px;width:120px;text-align:center;top:59.15px;font-size:14px;line-height:14px;font-weight:bold;color:#000">000:00:23</div>
<div class="t" style="left:368px;width:120px;text-align:center;top:59.15px;font-size:14px;line-height:14px;font-weight:bold;color:#000">781.522</div>
<div class="t" style="left:462.20000000000005px;width:120px;text-align:center;top:59.15px;font-size:14px;line-height:14px;font-weight:bold;color:#000">000:00:04</div>
<div class="t" style="left:5px;top:73.15px;font-size:14px;line-height:14px;font-weight:bold;color:#000">21</div>
<div class="t" style="left:168px;width:120px;text-align:center;top:73.15px;font-size:14px;line-height:14px;font-weight:bold;color:#000">938.553</div>
<div class="t" style="left:262px;width:120px;text-align:center;top:73.15px;font-size:14px;line-height:14px;font-weight:bold;color:#000">000:04:42</div>
<div class="t" style="left:368px;width:120px;text-align:center;top:73.15px;font-size:14px;line-height:14px;font-weight:bold;color:#000">462.544</div>
<div class="t" style="left:462.20000000000005px;width:120px;text-align:center;top:73.15px;font-size:14px;line-height:14px;font-weight:bold;color:#000">000:00:02</div>
<div class="t" style="left:5px;top:87.15px;font-size:14px;line-height:14px;font-weight:bold;color:#000">22</div>
<div class="t" style="left:168px;width:120px;text-align:center;top:87.15px;font-size:14px;line-height:14px;font-weight:bold;color:#000">204.000</div>
<div class="t" style="left:262px;width:120px;text-align:center;top:87.15px;font-size:14px;line-height:14px;font-weight:bold;color:#000">000:01:12</div>
<div class="t" style="left:368px;width:120px;text-align:center;top:87.15px;font-size:14px;line-height:14px;font-weight:bold;color:#000">1393.726</div>
<div class="t" style="left:462.20000000000005px;width:120px;text-align:center;top:87.15px;font-size:14px;line-height:14px;font-weight:bold;color:#000">000:00:06</div>
</div>
<div class="b" style="left:1253px;top:731px;width:17px;height:116px;background:#F0F0F0"></div>
<div class="b" style="left:1260px;top:749px;width:2px;height:37px;background:#7A7A7A"></div>
<div class="b" style="left:461px;top:847px;width:810px;height:20px;background:linear-gradient(#B4CBEA,#9DB8E0)"></div>
<div class="b" style="left:462px;top:850px;width:13px;height:13px;background:linear-gradient(#D6E4F6,#B8CDEA);border:1px solid #A8BEDC"></div>
<div class="b" style="left:479px;top:850px;width:13px;height:13px;background:linear-gradient(#D6E4F6,#B8CDEA);border:1px solid #A8BEDC"></div>
<div class="b" style="left:495px;top:850px;width:13px;height:13px;background:linear-gradient(#D6E4F6,#B8CDEA);border:1px solid #A8BEDC"></div>
<div class="b" style="left:511px;top:850px;width:13px;height:13px;background:linear-gradient(#D6E4F6,#B8CDEA);border:1px solid #A8BEDC"></div>
<svg class="b" style="left:465px;top:853px" width="8" height="8" viewBox="0 0 8 8"><rect x="0" y="0" width="1.3" height="8" fill="#4F6EA4"/><path d="M7 0V8L2 4Z" fill="#4F6EA4"/></svg>
<svg class="b" style="left:483px;top:853px" width="6" height="8" viewBox="0 0 6 8"><path d="M5 0V8L0 4Z" fill="#4F6EA4"/></svg>
<svg class="b" style="left:499px;top:853px" width="6" height="8" viewBox="0 0 6 8"><path d="M0 0V8L5 4Z" fill="#4F6EA4"/></svg>
<svg class="b" style="left:514px;top:853px" width="8" height="8" viewBox="0 0 8 8"><path d="M0 0V8L5 4Z" fill="#4F6EA4"/><rect x="6" y="0" width="1.3" height="8" fill="#4F6EA4"/></svg>
<svg class="b" style="left:520px;top:846px" width="180" height="22" viewBox="0 0 180 22"><defs><linearGradient id="tg1" x1="0" y1="0" x2="0" y2="1"><stop offset="0" stop-color="#EAF2FC"/><stop offset="1" stop-color="#BDD2EE"/></linearGradient><linearGradient id="tg2" x1="0" y1="0" x2="0" y2="1"><stop offset="0" stop-color="#FFFFFF"/><stop offset="1" stop-color="#DCE7F5"/></linearGradient></defs><path d="M7.8 1.5 V16.5 Q7.8 18.5 10 18.5 H41 L56.6 1.5Z" fill="url(#tg1)" stroke="#8EAAD6" stroke-width="1"/><path d="M48.8 18.5 L56.6 1.8 H111.7 V11 L105.4 18.5Z" fill="url(#tg1)" stroke="#8EAAD6" stroke-width="1"/><path d="M111.7 1.5 V16.5 Q111.7 18.5 114 18.5 H150 L166 1.5Z" fill="url(#tg2)" stroke="#8EAAD6" stroke-width="1"/></svg>
<div class="t" style="left:535px;top:852.27px;font-size:11.5px;line-height:11.5px;color:#1E2A5A;font-weight:normal;font-family:'Liberation Sans',sans-serif;">Errori</div>
<div class="t" style="left:576px;top:852.27px;font-size:11.5px;line-height:11.5px;color:#1E2A5A;font-weight:normal;font-family:'Liberation Sans',sans-serif;">Messaggi</div>
<div class="t" style="left:639px;top:852.27px;font-size:11.5px;line-height:11.5px;color:#000;font-weight:bold;font-family:'Liberation Sans',sans-serif;">Tempi</div>
<div class="b" style="left:456px;top:143px;width:5px;height:725px;background:#BFDBFF"></div>
<div class="b" style="left:1px;top:868px;width:1271px;height:1px;background:#5A7EB0"></div>
<div class="b" style="left:1px;top:869px;width:1271px;height:23px;border-radius:0 0 6px 6px;background:linear-gradient(#FFFFFF 0px,#D5E5F8 1px,#C8DCF5 6px,#B2CEF2 7px,#B8D2F3 16px,#C4DAF5 23px)"></div>
<div class="b" style="left:455px;top:869px;width:817px;height:23px;background:linear-gradient(#C8DCF6 0px,#A8C6EE 7px,#90B4E4 8px,#8AB0E2 23px);border-radius:0 0 6px 0"></div>
<div class="b" style="left:453px;top:869px;width:1px;height:23px;background:#6A8CBC"></div>
<div class="b" style="left:454px;top:869px;width:1px;height:23px;background:#F4F8FF"></div>
<div class="t" style="left:821px;top:874.86px;font-size:10.8px;line-height:10.8px;color:#15428B;font-weight:normal;font-family:'Liberation Sans',sans-serif;">F0.1</div>
<div class="t" style="left:874px;top:874.86px;font-size:10.8px;line-height:10.8px;color:#15428B;font-weight:normal;font-family:'Liberation Sans',sans-serif;">Z16.927999</div>
<div class="t" style="left:943px;top:874.86px;font-size:10.8px;line-height:10.8px;color:#15428B;font-weight:normal;font-family:'Liberation Sans',sans-serif;">X148</div>
<div class="t" style="left:1011px;top:874.86px;font-size:10.8px;line-height:10.8px;color:#15428B;font-weight:normal;font-family:'Liberation Sans',sans-serif;">Y0</div>
<div class="t" style="left:1238px;top:874.86px;font-size:10.8px;line-height:10.8px;color:#15428B;font-weight:normal;font-family:'Liberation Sans',sans-serif;">X</div>
<svg class="b" style="left:1261px;top:880px" width="12" height="12" viewBox="0 0 12 12"><g fill="#2E4468"><rect x="9" y="1" width="2" height="2"/><rect x="5" y="5" width="2" height="2"/><rect x="9" y="5" width="2" height="2"/><rect x="1" y="9" width="2" height="2"/><rect x="5" y="9" width="2" height="2"/><rect x="9" y="9" width="2" height="2"/></g></svg>
<div class="b" style="left:460px;top:144px;width:811px;height:529px;background:#fff"></div>
<svg class="b" style="left:460px;top:144px" width="811" height="529" viewBox="460 144 811 529"><rect x="462" y="146" width="808" height="526" fill="#00678F"/><path d="M855 146 L1094 146 Q1085 200 1053 224 L879 207 Q862 180 855 146Z" fill="#005C96"/><path d="M1018 146 L1094 146 Q1085 200 1053 224 L1018 219Z" fill="#00548C"/><path d="M947 146 L1016 146 Q1010 200 981 216 Q955 200 947 146Z" fill="#0048A0"/><path d="M1022 146 L1094 146 Q1088 205 1053 224 Q1030 215 1022 146Z" fill="#00509C"/><path d="M866 146 Q870 168 880 180" fill="none" stroke="#0A44A8" stroke-width="1.5" opacity=".7"/><g font-family="Liberation Sans" font-weight="bold" font-size="14" fill="#1A4EB4" opacity=".8"><text x="858" y="170" transform="rotate(-75 862 164)">8</text><text x="870" y="192" transform="rotate(-80 873 186)">r</text><text x="882" y="197" transform="rotate(-95 886 191)">a</text><text x="900" y="182" transform="rotate(-100 904 176)">2</text><text x="911" y="156" transform="rotate(-115 914 150)">1</text></g><path d="M462 326 L660 350 L912 382 L1269 425 L1269 672 L462 672Z" fill="#0088BB"/><path d="M485 146 L517 146 L583 220 L640 224 L640 348 L462 330 L462 146Z" fill="#007AAA"/><path d="M462 146 L485 146 L584 264 L600 345 L462 343Z" fill="#008CC2"/><path d="M462 259 L600 268 L605 345 L462 343Z" fill="#0092C8"/><rect x="505" y="146" width="14" height="200" fill="#0094CA" opacity=".7"/><path d="M462 340 L613 345 L612 421 L628 443 L617 500 L552 672 L462 672Z" fill="#0094CA"/><path d="M462 340 L583 345 L583 420 L598 440 L588 500 L521 672 L462 672Z" fill="#009ED6"/><path d="M505 230 L560 198 L600 230 L608 330 L590 390 L540 410 L500 380 L495 290Z" fill="#00A0D8" opacity=".35"/><ellipse cx="553" cy="295" rx="36" ry="95" fill="#00A8E0" opacity=".7"/><path d="M533 308 A21 42 0 0 0 575 308Z" fill="#0088B8" opacity=".55"/><ellipse cx="554" cy="308" rx="21" ry="42" fill="#0098CC" opacity=".35"/><path d="M462 408.9 L583 419.6 L583 427.8 L462 417.1Z" fill="#0084B6"/><path d="M462 420.8 L583 431.5 L583 439.0 L462 428.3Z" fill="#008CBE"/><path d="M462 459.5 L583 468.7 L583 483.7 L462 474.5Z" fill="#0088BA"/><path d="M462 464.5 L583 473.7 L583 481.3 L462 472.1Z" fill="#006E98"/><path d="M583 419.6 L613 422.3 L613 430.5 L583 427.8Z" fill="#00709C"/><path d="M583 431.5 L613 434.2 L613 441.7 L583 439.0Z" fill="#007CAA"/><path d="M583 468.7 L613 470.9 L613 485.9 L583 483.7Z" fill="#0078A8"/><path d="M583 473.7 L613 475.9 L613 483.5 L583 481.3Z" fill="#005C80"/><path d="M613 422.3 L880 446.1 L880 454.3 L613 430.5Z" fill="#006286"/><path d="M613 434.2 L880 458.0 L880 465.5 L613 441.7Z" fill="#0076A4"/><path d="M613 470.9 L880 491.2 L880 506.2 L613 485.9Z" fill="#006E98"/><path d="M613 475.9 L880 496.2 L880 503.8 L613 483.5Z" fill="#004A6C"/><path d="M776 453 Q800 436 840 434 L884 441 L849 584 L849 625 L780 618 L764 599 Q757 575 757 536 Q760 490 776 453Z" fill="#0060B4" opacity=".55"/><path d="M884 441 L849 584 L849 625 L840 625 Q838 520 866 442Z" fill="#0050C4" opacity=".6"/><path d="M810 453 Q770 490 767 524 Q768 565 783 592" fill="none" stroke="#0A4AB0" stroke-width="1.5" opacity=".55"/><g font-family="Liberation Sans" font-weight="bold" font-size="14" fill="#1A4EB8" opacity=".8"><text x="805" y="465" transform="rotate(-70 805 465)">3</text><text x="815" y="487" transform="rotate(-75 815 487)">E</text><text x="817" y="524" transform="rotate(-90 817 524)">1</text><text x="814" y="563" transform="rotate(-105 814 563)">E</text><text x="804" y="592" transform="rotate(-115 804 592)">a</text><text x="788" y="608" transform="rotate(-125 788 608)">r</text><text x="774" y="604" transform="rotate(-120 774 604)">8</text><text x="764" y="580" transform="rotate(-110 764 580)">8</text></g><path d="M913 321 L1270 354 L1270 628 L850 584Z" fill="#AFAFD1"/><path d="M850 584 L1270 623 L1270 672 L848 672Z" fill="#9D9DBB"/><path d="M848 654 L1023 671 L1023 672 L848 672Z" fill="#484458"/><defs><linearGradient id="ch" x1="0" y1="0" x2="0" y2="1"><stop offset="0" stop-color="#0606D4"/><stop offset=".5" stop-color="#0000AC"/><stop offset="1" stop-color="#00005E"/></linearGradient><linearGradient id="chf" x1="0" y1="0" x2="0" y2="1"><stop offset="0" stop-color="#0000D0"/><stop offset=".6" stop-color="#0000A8"/><stop offset="1" stop-color="#000070"/></linearGradient></defs><path d="M634 215 L684 218 L720 216 L725 262 Q722 330 709 355 L699 391 L689 396 L642 393 Q625 389 617 383 Q602 360 598 310 Q598 270 606 254 Q618 228 634 215Z" fill="url(#ch)"/><path d="M696 221 Q660 255 655 306 Q656 355 668 386 L689 396 L699 391 L709 355 Q722 330 725 262 L720 216Z" fill="url(#chf)"/><path d="M696 221 Q660 255 655 306 Q656 355 668 386" fill="none" stroke="#2A2AE0" stroke-width="1"/><path d="M682 213 L720 213 L720 240 L725 248 L725 265 L700 265 L695 222 L682 222Z" fill="#0A14FF"/><path d="M633 257 L671 259 L676 272 L704 276 L704 298 L690 300 L668 284 L637 277 L633 274Z" fill="#0A14FF"/><path d="M637 276 L668 283 L690 299 L684 306 L662 292 L637 282Z" fill="#000070"/><path d="M633 277 L642 279 L642 285 L634 284Z" fill="#000070"/><path d="M681 334 L709 338 L709 370 L690 370 L681 350Z" fill="#0A14FF"/><path d="M694 350 L707 352 L706 360 L694 358Z" fill="#000070"/><path d="M668 368 L694 370 L694 386 L678 388 L678 401 L642 399 L642 380 L668 380Z" fill="#0A14FF"/><path d="M678 374 L691 377 L690 382 L678 380Z" fill="#000070"/><path d="M738 223 L722 262 M700 380 L696 398" stroke="#2030FF" stroke-width="1"/><defs><linearGradient id="shell" x1="0" y1="0" x2="0" y2="1"><stop offset="0" stop-color="#A4A8B0"/><stop offset="1" stop-color="#8A9098"/></linearGradient><linearGradient id="inn" x1="0" y1="0" x2="0" y2="1"><stop offset="0" stop-color="#A8BEDC"/><stop offset=".45" stop-color="#98B2D4"/><stop offset=".8" stop-color="#7A889C"/><stop offset="1" stop-color="#50586A"/></linearGradient><linearGradient id="inn2" x1="0" y1="0" x2="0" y2="1"><stop offset="0" stop-color="#A4C4EC"/><stop offset=".6" stop-color="#8EA8CC"/><stop offset="1" stop-color="#5E6A80"/></linearGradient><linearGradient id="endf" x1="0" y1="0" x2="0" y2="1"><stop offset="0" stop-color="#9AA2AA"/><stop offset="1" stop-color="#BEC2C6"/></linearGradient></defs><path d="M701 264 L793 271 L793 362 L711 357Z" fill="url(#shell)"/><path d="M697 263 L747 266 L747 356 L692 355 Q684 340 684 320 L684 299 L700 299Z" fill="url(#inn)"/><path d="M722 265 Q712 310 722 356" fill="none" stroke="#A8C0E0" stroke-width="1.5" opacity=".5"/><path d="M744 276 L780 278 L780 353 L744 352Z" fill="url(#inn2)"/><path d="M744 276 Q733 314 744 352" fill="#9EBEE6"/><path d="M758 282 Q752 314 758 346" fill="none" stroke="#B0C4E0" stroke-width="1" opacity=".4"/><ellipse cx="793" cy="316" rx="16" ry="46" fill="url(#endf)"/><ellipse cx="788" cy="316" rx="10" ry="30" fill="#A4C0E4"/><ellipse cx="789.5" cy="317" rx="4.5" ry="9" fill="#8CA4C4"/><g stroke="#6A6AE8" stroke-width="1"><path d="M770 286 L789 288"/><path d="M752 303 L770 305"/><path d="M756 344 L773 346"/></g><path d="M681 336 L700 339 L706 352 L709 370 L690 370 L681 350Z" fill="#0A14FF"/><path d="M694 354 L707 356 L706 364 L694 362Z" fill="#000070"/><path d="M787 375 L800 376 L812 387 L801 434 L794 463 L771 454 L786 376Z" fill="#C4C4C4"/><path d="M800 376 L812 387 L801 434 L794 463 L790 440Z" fill="#ABABAB"/><path d="M771 454 L794 463 L801 434 L776 438Z" fill="#9494C4"/><path d="M787 361 L801 362 L802 377 L788 376Z" fill="#D4A800"/><g stroke="#E02020" stroke-width="1.2" stroke-dasharray="2 2" fill="none"><path d="M806 320 L910 329"/><path d="M800 322 L893 401"/><path d="M801 364 L898 385"/></g><g stroke="#F0E040" stroke-width="1" fill="none"><path d="M792 323 L798 313 L808 313"/><path d="M788 328 L795 320"/></g><g font-family="Liberation Sans" font-size="10" fill="#F0E040"><text x="787" y="329">X</text><text x="796" y="321">Y</text><text x="801" y="318">Z</text></g><g stroke="#E8E8F0" stroke-width="1" fill="none"><path d="M764 531 L793 533"/><path d="M764 531 L774 542"/><path d="M764 531 L757 559"/></g><g font-family="Liberation Serif" font-size="12" fill="#E8D840"><text x="791" y="533">Z</text><text x="773" y="546">Y</text><text x="755" y="561">X</text></g><path d="M1235 637 L1260 639" stroke="#0000E0" stroke-width="1.5"/><path d="M1235 637 L1243 647" stroke="#00C000" stroke-width="1.5"/><path d="M1235 637 L1230 659" stroke="#E00000" stroke-width="1.5"/><g font-family="Liberation Sans" font-size="10" fill="#F0F0F0"><text x="1263" y="639">Z</text><text x="1247" y="652">Y</text><text x="1228" y="665">X</text></g></svg>
<div class="b" style="left:460px;top:144px;width:811px;height:2px;background:#8C8C8C"></div>
<div class="b" style="left:460px;top:144px;width:2px;height:529px;background:#8C8C8C"></div>
<div class="b" style="left:1270px;top:146px;width:2px;height:527px;background:#F4F4F4"></div>
<div class="b" style="left:460px;top:672px;width:811px;height:1px;background:#F4F4F4"></div>
</body></html>
